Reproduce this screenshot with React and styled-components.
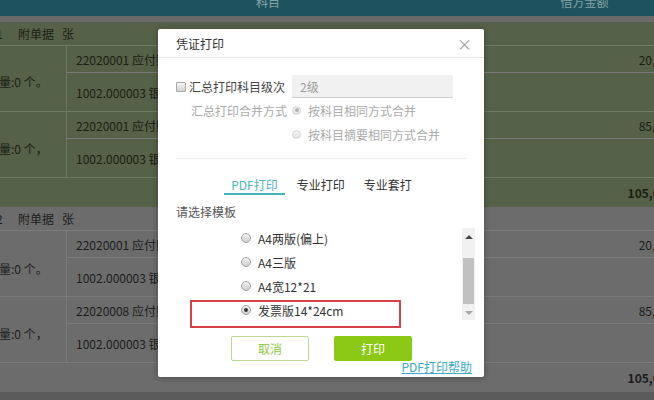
import React from 'react';
import styled, { createGlobalStyle, css } from 'styled-components';

const Global = createGlobalStyle`
  *, *::before, *::after { box-sizing: border-box; }
  html, body { margin: 0; padding: 0; overflow: hidden; background: #5a5a5a; }
  body { font-family: "Noto Sans CJK SC", "Noto Sans", sans-serif; }
  #root { width: 654px; height: 400px; overflow: hidden; position: relative; }
`;

const tones = {
  green: { bg: '#556148', line: '#6e7b61', fg: '#1a2014' },
  gray: { bg: '#6c6c6c', line: '#7b7b7b', fg: '#1c1c1c' },
};

const Page = styled.div`
  width: 700px;
  height: 400px;
  position: relative;
  display: flex;
  flex-direction: column;
`;

const HeadBar = styled.div`
  height: 16px;
  flex: none;
  background: #1c535e;
  display: grid;
  grid-template-columns: 67px 402px 231px;
  color: #86a2a6;
  font-size: 12px;
  line-height: 8px;
  overflow: hidden;
`;

const HeadCell = styled.div`
  text-align: center;
  margin-top: -2px;
`;

const Strip = styled.div`
  height: 6px;
  flex: none;
  background: #696969;
`;

const Voucher = styled.div`
  flex: none;
  background: ${p => tones[p.$tone].bg};
  color: ${p => tones[p.$tone].fg};
  font-size: 12px;
`;

const VHead = styled.div`
  height: 24px;
  border-bottom: 1px solid ${p => tones[p.$tone].line};
  display: flex;
  align-items: center;
  white-space: nowrap;
`;

const VNo = styled.span`
  margin-left: -4px;
  width: 22px;
`;

const VAttach = styled.span`
  width: 44px;
`;

const Entry = styled.div`
  display: grid;
  grid-template-columns: 67px 1fr;
  border-bottom: 1px solid ${p => tones[p.$tone].line};
`;

const Qty = styled.div`
  border-right: 1px solid ${p => tones[p.$tone].line};
  display: flex;
  align-items: center;
  padding-top: ${p => p.$shift}px;
  white-space: nowrap;
  overflow: hidden;
`;

const QtyText = styled.span`
  margin-left: -1px;
`;

const Lines = styled.div`
  display: flex;
  flex-direction: column;
`;

const Line = styled.div`
  height: ${p => p.$h}px;
  display: flex;
  align-items: center;
  justify-content: space-between;
  padding: 0 8px 0 9px;
  white-space: nowrap;
  & + & {
    border-top: 1px solid ${p => tones[p.$tone].line};
  }
`;

const Total = styled.div`
  height: 29px;
  display: flex;
  align-items: center;
  justify-content: flex-end;
  padding-right: 8px;
  font-weight: 700;
`;

const Bottom = styled.div`
  flex: 1;
  background: #5b5b5b;
`;

/* dialog */
const Dialog = styled.div`
  position: absolute;
  left: 158px;
  top: 29px;
  width: 326px;
  height: 348px;
  background: #fff;
  border-radius: 2px;
  box-shadow: 0 1px 6px rgba(0, 0, 0, 0.3);
  display: flex;
  flex-direction: column;
  font-size: 12px;
  color: #444;
`;

const DHead = styled.div`
  height: 29px;
  flex: none;
  border-bottom: 1px solid #e6e6e6;
  display: flex;
  align-items: center;
  justify-content: space-between;
  padding: 0 12px 0 18px;
  color: #333;
`;

const Close = styled.span`
  color: #9a9a9a;
  font-size: 15px;
  line-height: 1;
`;

const DBody = styled.div`
  padding: 0 17px 0 18px;
  display: flex;
  flex-direction: column;
`;

const Form = styled.div`
  margin-top: 17px;
  display: grid;
  grid-template-columns: 116px 1fr;
  grid-template-rows: 23px 24px 24px;
  align-items: center;
`;

const FieldLabel = styled.div`
  display: flex;
  align-items: center;
  justify-content: ${p => (p.$end ? 'flex-end' : 'flex-start')};
  padding-right: 5px;
  color: ${p => (p.$disabled ? '#ababab' : '#444')};
  white-space: nowrap;
`;

const Check = styled.span`
  width: 10px;
  height: 10px;
  flex: none;
  border: 1px solid #a9a9a9;
  border-radius: 1px;
  background: linear-gradient(#f6f6f6, #d3d3d3);
  margin-right: 3px;
`;

const LevelInput = styled.div`
  width: 161px;
  height: 23px;
  background: #f1f1f1;
  border-bottom: 1px solid #cfcfcf;
  color: #9c9c9c;
  display: flex;
  align-items: center;
  padding-left: 8px;
`;

const Choice = styled.div`
  display: flex;
  align-items: center;
  gap: 7px;
  color: ${p => (p.$disabled ? '#ababab' : '#333')};
  white-space: nowrap;
`;

const Radio = styled.span`
  width: ${p => (p.$disabled ? 9 : 10)}px;
  height: ${p => (p.$disabled ? 9 : 10)}px;
  border-radius: 50%;
  flex: none;
  position: relative;
  border: 1px solid ${p => (p.$disabled ? '#d4d4d4' : '#a2a2a2')};
  background: ${p =>
    p.$disabled ? 'linear-gradient(#f5f5f5, #e2e2e2)' : 'linear-gradient(#f2f2f2, #cfcfcf)'};
  ${p =>
    p.$checked &&
    css`
      &::after {
        content: '';
        position: absolute;
        left: 50%;
        top: 50%;
        width: 4px;
        height: 4px;
        margin: -2px 0 0 -2px;
        border-radius: 50%;
        background: ${p.$disabled ? '#b5b5b5' : '#3a3a3a'};
      }
    `}
`;

const Separator = styled.div`
  height: 1px;
  margin-top: 12px;
  background: #ececec;
`;

const Tabs = styled.div`
  margin-top: 18px;
  display: flex;
  justify-content: center;
  gap: 5px;
`;

const Tab = styled.div`
  padding: 0 7px;
  line-height: 16px;
  border-bottom: 2px solid ${p => (p.$active ? '#3db7b9' : 'transparent')};
  color: ${p => (p.$active ? '#4bb6bf' : '#333')};
`;

const SectionLabel = styled.div`
  margin-top: 9px;
  line-height: 16px;
  color: #555;
`;

const ListBox = styled.div`
  margin-top: 6px;
  height: 96px;
  display: flex;
  margin-right: -8px;
`;

const Items = styled.div`
  flex: 1;
  padding-left: 65px;
  display: flex;
  flex-direction: column;
`;

const Item = styled.div`
  height: 24px;
  display: flex;
  align-items: center;
  gap: 7px;
  color: #333;
`;

const Scrollbar = styled.div`
  width: 13px;
  height: 92px;
  margin-top: 2px;
  background: #f1f1f1;
  display: flex;
  flex-direction: column;
  align-items: center;
`;

const ArrowBox = styled.div`
  height: ${p => p.$h}px;
  flex: none;
  display: flex;
  align-items: center;
  justify-content: center;
`;

const Arrow = styled.span`
  width: 0;
  height: 0;
  border-left: 4px solid transparent;
  border-right: 4px solid transparent;
  ${p =>
    p.$down
      ? css`border-top: 4px solid #a8a8a8;`
      : css`border-bottom: 4px solid #4a4a4a;`}
`;

const Thumb = styled.div`
  width: 11px;
  height: 46px;
  margin-top: 12px;
  background: #c1c1c1;
  flex: none;
`;

const Gap = styled.div`
  flex: 1;
`;

const Buttons = styled.div`
  margin-top: 14px;
  display: flex;
  justify-content: center;
  gap: 25px;
`;

const Button = styled.div`
  width: 78px;
  height: 25px;
  border-radius: 2px;
  display: flex;
  align-items: center;
  justify-content: center;
  ${p =>
    p.$primary
      ? css`
          background: #8cc816;
          color: #fff;
        `
      : css`
          background: #fff;
          border: 1px solid #bcd98e;
          color: #8cc63f;
        `}
`;

const Help = styled.div`
  margin-right: -5px;
  text-align: right;
  line-height: 12px;
  color: #3aa8c6;
  text-decoration: underline;
`;

const Highlight = styled.div`
  position: absolute;
  left: 32px;
  top: 271px;
  width: 211px;
  height: 28px;
  border: 2px solid #d6414a;
  pointer-events: none;
`;

const vouchers = [
  {
    tone: 'green',
    no: '1',
    entries: [
      { debit: '22020001 应付账款', credit: '1002.000003 银行存款', amount: '20,000.00', qty: '。', shift: 6 },
      { debit: '22020001 应付账款', credit: '1002.000003 银行存款', amount: '85,000.00', qty: '，', shift: 8 },
    ],
    total: '105,000.00',
  },
  {
    tone: 'gray',
    no: '2',
    entries: [
      { debit: '22020001 应付账款', credit: '1002.000003 银行存款', amount: '20,000.00', qty: '。', shift: 10 },
      { debit: '22020008 应付账款', credit: '1002.000003 银行存款', amount: '85,000.00', qty: '，', shift: 8 },
    ],
    total: '105,000.00',
  },
];

const templates = [
  { name: 'A4两版(偏上)' },
  { name: 'A4三版' },
  { name: 'A4宽12*21' },
  { name: '发票版14*24cm', checked: true },
];

export default function App() {
  return (
    <>
      <Global />
      <Page>
        <HeadBar>
          <HeadCell />
          <HeadCell>科目</HeadCell>
          <HeadCell>借方金额</HeadCell>
        </HeadBar>
        <Strip />
        {vouchers.map(v => (
          <Voucher key={v.no} $tone={v.tone}>
            <VHead $tone={v.tone}>
              <VNo>{v.no}</VNo>
              <VAttach>附单据</VAttach>
              <span>张</span>
            </VHead>
            {v.entries.map((e, i) => (
              <Entry key={i} $tone={v.tone}>
                <Qty $tone={v.tone} $shift={e.shift}>
                  <QtyText>量:0 个{e.qty}</QtyText>
                </Qty>
                <Lines>
                  <Line $h={26} $tone={v.tone}>
                    <span>{e.debit}</span>
                    <span>{e.amount}</span>
                  </Line>
                  <Line $h={39} $tone={v.tone}>
                    <span>{e.credit}</span>
                  </Line>
                </Lines>
              </Entry>
            ))}
            <Total>{v.total}</Total>
          </Voucher>
        ))}
        <Bottom />
      </Page>

      <Dialog>
        <DHead>
          <span>凭证打印</span>
          <Close>×</Close>
        </DHead>
        <DBody>
          <Form>
            <FieldLabel>
              <Check />
              汇总打印科目级次
            </FieldLabel>
            <LevelInput>2级</LevelInput>
            <FieldLabel $end $disabled>汇总打印合并方式</FieldLabel>
            <Choice $disabled>
              <Radio $disabled $checked />
              按科目相同方式合并
            </Choice>
            <div />
            <Choice $disabled>
              <Radio $disabled />
              按科目摘要相同方式合并
            </Choice>
          </Form>
          <Separator />
          <Tabs>
            <Tab $active>PDF打印</Tab>
            <Tab>专业打印</Tab>
            <Tab>专业套打</Tab>
          </Tabs>
          <SectionLabel>请选择模板</SectionLabel>
          <ListBox>
            <Items>
              {templates.map(t => (
                <Item key={t.name}>
                  <Radio $checked={t.checked} />
                  {t.name}
                </Item>
              ))}
            </Items>
            <Scrollbar>
              <ArrowBox $h={18}>
                <Arrow />
              </ArrowBox>
              <Thumb />
              <Gap />
              <ArrowBox $h={14}>
                <Arrow $down />
              </ArrowBox>
            </Scrollbar>
          </ListBox>
          <Buttons>
            <Button>取消</Button>
            <Button $primary>打印</Button>
          </Buttons>
          <Help>PDF打印帮助</Help>
        </DBody>
        <Highlight />
      </Dialog>
    </>
  );
}
